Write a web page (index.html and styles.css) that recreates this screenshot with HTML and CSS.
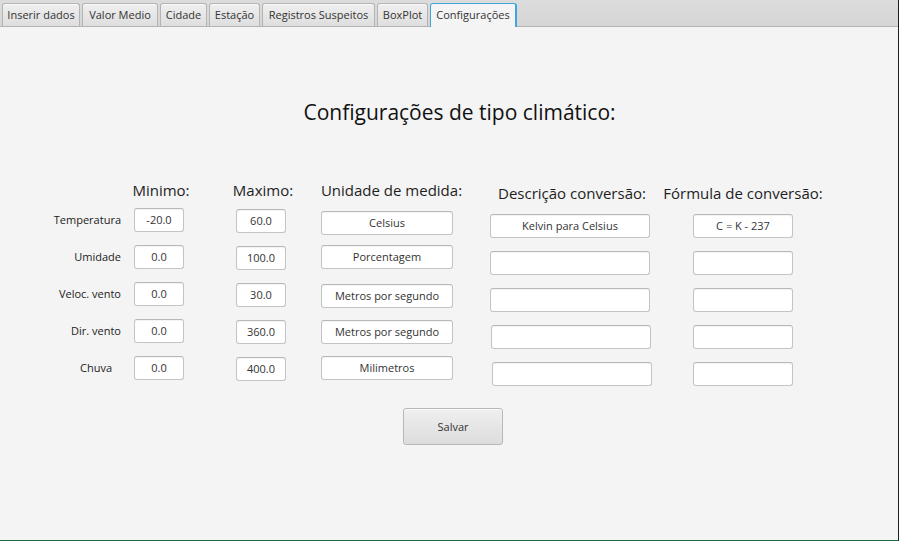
FILE: index.html
```html
<!DOCTYPE html>
<html lang="pt">
<head>
<meta charset="utf-8">
<title>Configurações</title>
<link rel="stylesheet" href="styles.css">
</head>
<body>
<div class="app">
  <div class="tabbar">
    <div class="tab w1">Inserir dados</div>
    <div class="tab w2">Valor Medio</div>
    <div class="tab w3">Cidade</div>
    <div class="tab w4">Estação</div>
    <div class="tab w5">Registros Suspeitos</div>
    <div class="tab w6">BoxPlot</div>
    <div class="tab w7 selected">Configurações</div>
  </div>
  <div class="content">
    <h1 class="title">Configurações de tipo climático:</h1>
    <div class="form">
      <div class="col col-labels">
        <div class="row-label">Temperatura</div>
        <div class="row-label">Umidade</div>
        <div class="row-label">Veloc. vento</div>
        <div class="row-label">Dir. vento</div>
        <div class="row-label chuva">Chuva</div>
      </div>
      <div class="col col-min">
        <div class="head">Minimo:</div>
        <div class="fields">
          <div class="field">-20.0</div>
          <div class="field">0.0</div>
          <div class="field">0.0</div>
          <div class="field">0.0</div>
          <div class="field">0.0</div>
        </div>
      </div>
      <div class="col col-max">
        <div class="head">Maximo:</div>
        <div class="fields">
          <div class="field">60.0</div>
          <div class="field">100.0</div>
          <div class="field">30.0</div>
          <div class="field">360.0</div>
          <div class="field">400.0</div>
        </div>
      </div>
      <div class="col col-unit">
        <div class="head">Unidade de medida:</div>
        <div class="fields">
          <div class="field">Celsius</div>
          <div class="field">Porcentagem</div>
          <div class="field">Metros por segundo</div>
          <div class="field">Metros por segundo</div>
          <div class="field">Milimetros</div>
        </div>
      </div>
      <div class="col col-desc">
        <div class="head">Descrição conversão:</div>
        <div class="fields">
          <div class="field">Kelvin para Celsius</div>
          <div class="field"></div>
          <div class="field"></div>
          <div class="field shift1"></div>
          <div class="field shift2"></div>
        </div>
      </div>
      <div class="col col-form">
        <div class="head">Fórmula de conversão:</div>
        <div class="fields">
          <div class="field">C = K - 237</div>
          <div class="field"></div>
          <div class="field"></div>
          <div class="field"></div>
          <div class="field"></div>
        </div>
      </div>
    </div>
    <div class="actions">
      <button class="btn" type="button">Salvar</button>
    </div>
  </div>
</div>
</body>
</html>
```

FILE: styles.css
```css
* { box-sizing: border-box; }
html, body { margin: 0; padding: 0; }
body {
  font-family: "Open Sans", "Noto Sans", sans-serif;
  color: #222;
  background: #f4f4f4;
}
.app {
  width: 899px;
  height: 541px;
  background: #f4f4f4;
  border-right: 1px solid #1e1e1e;
  border-bottom: 1px solid #1f6b3e;
  overflow: hidden;
}
.tabbar {
  height: 27px;
  background: linear-gradient(#dcdcdc, #d6d6d6);
  border-bottom: 1px solid #b3b3b3;
  display: flex;
  align-items: flex-end;
  gap: 2px;
  padding-left: 2px;
}
.tab {
  height: 23px;
  border: 1px solid #b4b4b4;
  border-bottom: none;
  border-radius: 3px 3px 0 0;
  background: linear-gradient(#efefef, #dedede);
  box-shadow: inset 0 1px 0 #fafafa;
  font-size: 11px;
  line-height: 21px;
  text-align: center;
  color: #333;
  white-space: nowrap;
}
.w1 { width: 78px; }
.w2 { width: 76px; }
.w3 { width: 47px; }
.w4 { width: 51px; }
.w5 { width: 113px; }
.w6 { width: 51px; }
.w7 { width: 87px; }
.tab.selected {
  height: 24px;
  margin-bottom: -1px;
  border-color: #3ea6dc;
  border-width: 1px 2px 0 1px;
  background: #f4f4f4;
  box-shadow: none;
  position: relative;
}
.content {
  height: 513px;
}
.title {
  margin: 71px 0 0 0;
  padding-left: 21px;
  text-align: center;
  font-size: 21px;
  line-height: 28px;
  font-weight: 400;
  color: #111;
}
.form {
  display: flex;
  margin-top: 54px;
  padding-left: 40px;
  align-items: flex-start;
}
.col {
  display: flex;
  flex-direction: column;
  align-items: center;
}
.head {
  height: 20px;
  font-size: 15px;
  line-height: 20px;
  white-space: nowrap;
  color: #1e1e1e;
}
.fields {
  display: flex;
  flex-direction: column;
  gap: 13px;
  width: 100%;
}
.field {
  height: 24px;
  background: #fff;
  border: 1px solid #c4c4c4;
  border-top-color: #b8b8b8;
  border-radius: 3px;
  box-shadow: inset 0 1px 1px rgba(0,0,0,0.05);
  font-size: 11px;
  line-height: 22px;
  text-align: center;
  color: #333;
  white-space: nowrap;
}
.col-labels {
  width: 81px;
  align-items: flex-end;
  padding-top: 28px;
  gap: 13px;
}
.row-label {
  height: 24px;
  line-height: 24px;
  font-size: 11px;
  color: #222;
  white-space: nowrap;
}
.row-label.chuva { margin-right: 9px; }
.col-min { width: 50px; margin-left: 13px; }
.col-min .head { margin-left: 4px; }
.col-min .fields { margin-top: 8px; }
.col-max { width: 50px; margin-left: 52px; }
.col-max .head { margin-left: 4px; }
.col-max .fields { margin-top: 9px; }
.col-unit { width: 132px; margin-left: 35px; }
.col-unit .head { margin-left: 9px; }
.col-unit .fields { margin-top: 11px; gap: 12px; }
.col-unit .field:first-child { margin-bottom: -2px; }
.col-unit .field:nth-child(2) { margin-bottom: 3px; }
.col-desc { width: 160px; margin-left: 37px; padding-top: 3px; }
.col-desc .head { margin-left: 4px; }
.col-desc .fields { margin-top: 11px; }
.field.shift1 { margin-left: 1px; margin-right: -1px; }
.field.shift2 { margin-left: 2px; margin-right: -2px; }
.col-form { width: 100px; margin-left: 43px; padding-top: 3px; }
.col-form .fields { margin-top: 11px; }
.actions {
  display: flex;
  justify-content: center;
  padding-left: 8px;
  margin-top: 22px;
}
.btn {
  width: 100px;
  height: 37px;
  border: 1px solid #b8b8b8;
  border-radius: 3px;
  background: linear-gradient(#efefef, #dddddd);
  box-shadow: inset 0 1px 0 #fafafa;
  font-family: "Open Sans", "Noto Sans", sans-serif;
  font-size: 11px;
  color: #333;
  padding: 0;
}
```
